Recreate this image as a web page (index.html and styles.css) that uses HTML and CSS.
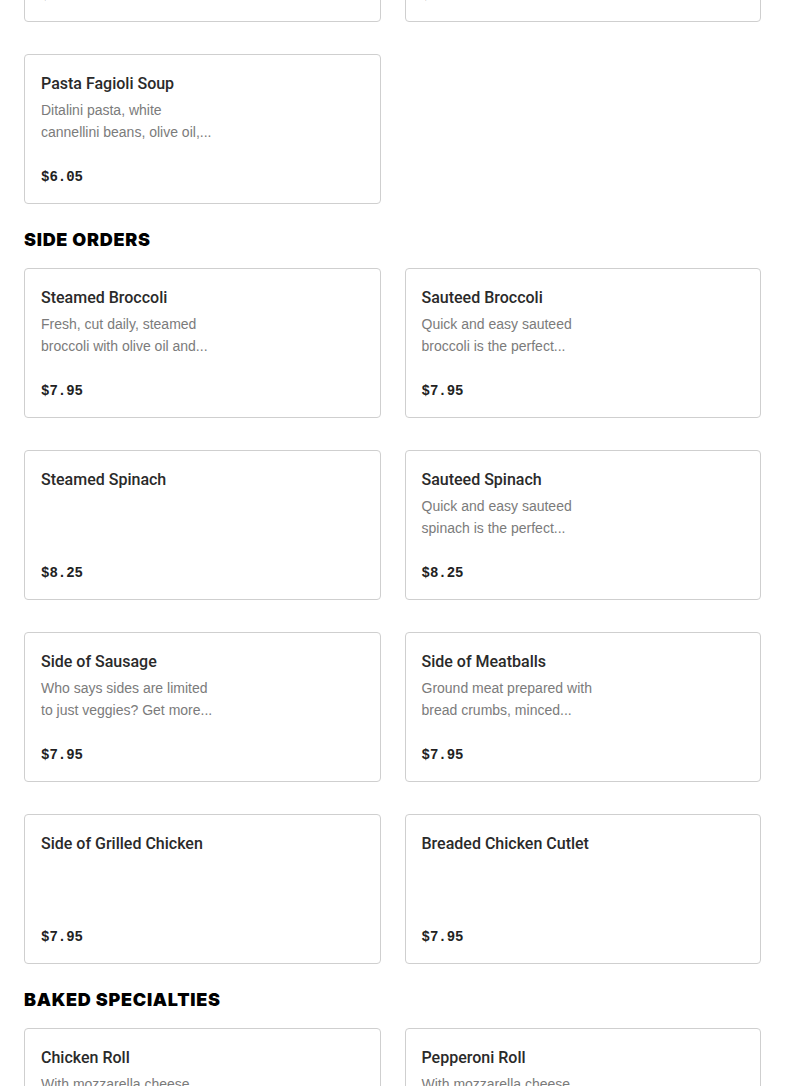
FILE: index.html
```html
<!DOCTYPE html>
<html lang="en">
<head>
    <meta charset="UTF-8">
    <title>Menu</title>
    <meta name="viewport" content="width=device-width, initial-scale=1">
    <link rel="stylesheet" href="styles.css">
</head>
<body>
<div class="menu">

    <div class="menu--grid">
        <div class="menu--card">
            <h3 class="menu--title">Minestrone Soup</h3>
            <p class="menu--desc">Fresh vegetables, beans and pasta in a tomato...</p>
            <div class="menu--price">$6.05</div>
        </div>
        <div class="menu--card">
            <h3 class="menu--title">Chicken Soup</h3>
            <p class="menu--desc">Homemade chicken soup with carrots, celery and...</p>
            <div class="menu--price">$6.05</div>
        </div>
        <div class="menu--card">
            <h3 class="menu--title">Pasta Fagioli Soup</h3>
            <p class="menu--desc">Ditalini pasta, white cannellini beans, olive oil,...</p>
            <div class="menu--price">$6.05</div>
        </div>
    </div>

    <h2 class="menu--section">SIDE ORDERS</h2>
    <div class="menu--grid">
        <div class="menu--card">
            <h3 class="menu--title">Steamed Broccoli</h3>
            <p class="menu--desc">Fresh, cut daily, steamed broccoli with olive oil and...</p>
            <div class="menu--price">$7.95</div>
        </div>
        <div class="menu--card">
            <h3 class="menu--title">Sauteed Broccoli</h3>
            <p class="menu--desc">Quick and easy sauteed broccoli is the perfect...</p>
            <div class="menu--price">$7.95</div>
        </div>
        <div class="menu--card">
            <h3 class="menu--title">Steamed Spinach</h3>
            <div class="menu--price">$8.25</div>
        </div>
        <div class="menu--card">
            <h3 class="menu--title">Sauteed Spinach</h3>
            <p class="menu--desc">Quick and easy sauteed spinach is the perfect...</p>
            <div class="menu--price">$8.25</div>
        </div>
        <div class="menu--card">
            <h3 class="menu--title">Side of Sausage</h3>
            <p class="menu--desc">Who says sides are limited to just veggies? Get more...</p>
            <div class="menu--price">$7.95</div>
        </div>
        <div class="menu--card">
            <h3 class="menu--title">Side of Meatballs</h3>
            <p class="menu--desc">Ground meat prepared with bread crumbs, minced...</p>
            <div class="menu--price">$7.95</div>
        </div>
        <div class="menu--card">
            <h3 class="menu--title">Side of Grilled Chicken</h3>
            <div class="menu--price">$7.95</div>
        </div>
        <div class="menu--card">
            <h3 class="menu--title">Breaded Chicken Cutlet</h3>
            <div class="menu--price">$7.95</div>
        </div>
    </div>

    <h2 class="menu--section">BAKED SPECIALTIES</h2>
    <div class="menu--grid">
        <div class="menu--card">
            <h3 class="menu--title">Chicken Roll</h3>
            <p class="menu--desc">With mozzarella cheese</p>
            <div class="menu--price">$9.95</div>
        </div>
        <div class="menu--card">
            <h3 class="menu--title">Pepperoni Roll</h3>
            <p class="menu--desc">With mozzarella cheese</p>
            <div class="menu--price">$9.95</div>
        </div>
    </div>

</div>
</body>
</html>
```

FILE: styles.css
```css
*, *:before, *:after {
    box-sizing: border-box;
    padding: 0;
    margin: 0;
}

body {
    background: #fff;
    font-family: "Liberation Sans", Arial, sans-serif;
    color: #222;
    overflow: hidden;
}

/* page is shown scrolled, first row is cut at the top */
.menu {
    margin-top: -128px;
    padding: 0 24px;
}

.menu--grid {
    display: grid;
    grid-template-columns: 1fr 1fr;
    gap: 32px 24px;
}

.menu--section {
    font-family: Inter, "Liberation Sans", sans-serif;
    font-size: 18px;
    line-height: 24px;
    font-weight: 900;
    letter-spacing: 0.7px;
    color: #000;
    margin: 24px 0 16px;
}

.menu--card {
    display: flex;
    flex-direction: column;
    height: 150px;
    padding: 17px 16px 16px;
    border: 1px solid #cfcfcf;
    border-radius: 4px;
}

.menu--title {
    font-family: Roboto, "Liberation Sans", sans-serif;
    font-size: 16px;
    line-height: 24px;
    font-weight: 500;
    color: #2a2a2a;
}

.menu--desc {
    margin-top: 3px;
    max-width: 178px;
    font-size: 14px;
    line-height: 22px;
    color: #7b7b7b;
}

.menu--price {
    margin-top: auto;
    font-family: "Liberation Mono", "Courier New", monospace;
    font-size: 14px;
    line-height: 20px;
    font-weight: 700;
    color: #222;
}
```
